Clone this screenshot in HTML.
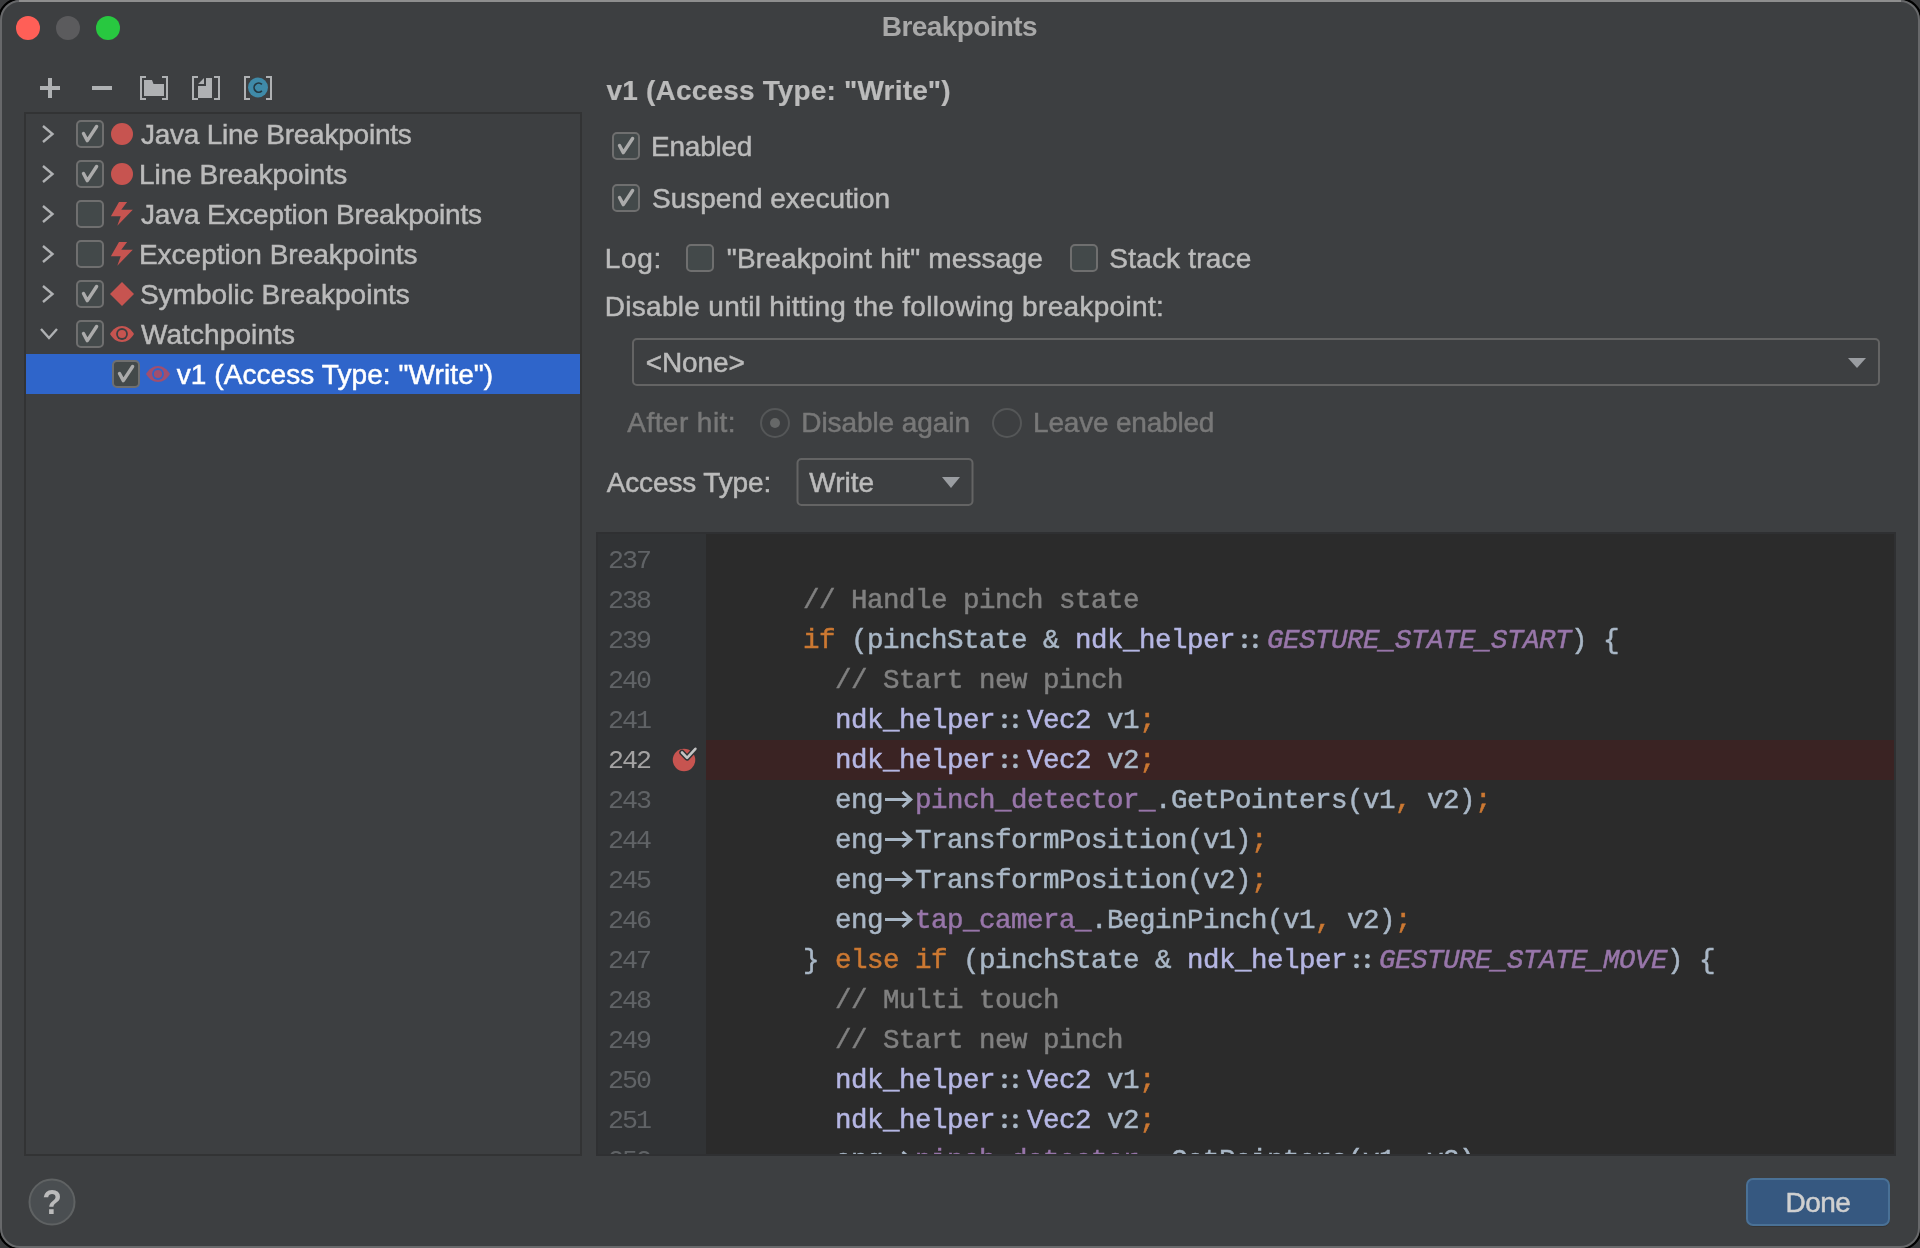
<!DOCTYPE html>
<html><head><meta charset="utf-8"><title>Breakpoints</title>
<style>html,body{margin:0;padding:0;background:#1E1E1E;overflow:hidden}svg{display:block}</style></head>
<body><svg width="1920" height="1248" viewBox="0 0 1920 1248" style="will-change:transform">
<rect x="0" y="0" width="1920" height="1248" fill="#3A3B3D"/>
<rect x="-1" y="-1" width="1922" height="1250" rx="21" fill="none" stroke="#000" stroke-width="2.5"/>
<rect x="1" y="1" width="1918" height="1246" rx="19" fill="#3D3F41" stroke="#67686A" stroke-width="2"/>
<path d="M19 1 H1901" stroke="#8E8E8E" stroke-width="2"/>
<circle cx="28" cy="28" r="12" fill="#FF5F57"/>
<circle cx="68" cy="28" r="12" fill="#5B5B5D"/>
<circle cx="108" cy="28" r="12" fill="#28C840"/>
<text x="881.75" y="36.25" font-family="Liberation Sans" font-size="28" font-weight="700" fill="#A8A8A8" stroke="#A8A8A8" stroke-width="0" letter-spacing="-0.590" xml:space="preserve" >Breakpoints</text>
<rect x="40" y="86" width="20" height="4" fill="#AFB1B3"/><rect x="48" y="78" width="4" height="20" fill="#AFB1B3"/>
<rect x="92" y="86" width="20" height="4" fill="#AFB1B3"/>
<path d="M146 77 H141 V99 H146 M162 77 H167 V99 H162" fill="none" stroke="#AFB1B3" stroke-width="2"/>
<path d="M144 80 H152 L153.5 84 H164 V96 H144 Z" fill="#AFB1B3"/>
<path d="M198 77 H193 V99 H198 M214 77 H219 V99 H214" fill="none" stroke="#AFB1B3" stroke-width="2"/>
<path d="M198 86 H206 V78 H212 V98 H198 Z" fill="#AFB1B3"/><path d="M198.2 84 L204 78 V84 Z" fill="#AFB1B3"/>
<path d="M250 77 H245 V99 H250 M266 77 H271 V99 H266" fill="none" stroke="#AFB1B3" stroke-width="2"/>
<circle cx="258" cy="87.5" r="10" fill="#3F8AA8"/><path d="M261.9 84.3 A4.6 4.6 0 1 0 261.9 90.9" fill="none" stroke="#243740" stroke-width="1.7"/>
<rect x="25" y="113" width="556" height="1042" fill="#3D3F41" stroke="#323334" stroke-width="2"/>
<rect x="26" y="354" width="554" height="40" rx="0" fill="#2F65CA" />
<path d="M43 126 L52.5 134 L43 142" fill="none" stroke="#AFB1B3" stroke-width="2.4"/>
<rect x="77" y="121" width="26" height="26" rx="4" fill="#43494A" stroke="#6F6F6F" stroke-width="2"/><path d="M83.5 133.5 L87.3 140.6 L96.6 126.5" fill="none" stroke="#ABABAB" stroke-width="3.4" stroke-linecap="round" stroke-linejoin="round"/>
<circle cx="122" cy="134" r="11" fill="#C75450"/>
<text x="140.90" y="144.00" font-family="Liberation Sans" font-size="28" font-weight="400" fill="#BBBBBB" stroke="#BBBBBB" stroke-width="0.5" letter-spacing="-0.230" xml:space="preserve" >Java Line Breakpoints</text>
<path d="M43 166 L52.5 174 L43 182" fill="none" stroke="#AFB1B3" stroke-width="2.4"/>
<rect x="77" y="161" width="26" height="26" rx="4" fill="#43494A" stroke="#6F6F6F" stroke-width="2"/><path d="M83.5 173.5 L87.3 180.6 L96.6 166.5" fill="none" stroke="#ABABAB" stroke-width="3.4" stroke-linecap="round" stroke-linejoin="round"/>
<circle cx="122" cy="174" r="11" fill="#C75450"/>
<text x="138.90" y="184.00" font-family="Liberation Sans" font-size="28" font-weight="400" fill="#BBBBBB" stroke="#BBBBBB" stroke-width="0.5" letter-spacing="-0.020" xml:space="preserve" >Line Breakpoints</text>
<path d="M43 206 L52.5 214 L43 222" fill="none" stroke="#AFB1B3" stroke-width="2.4"/>
<rect x="77" y="201" width="26" height="26" rx="4" fill="#43494A" stroke="#6F6F6F" stroke-width="2"/>
<path d="M119 202 H127.1 L121.3 209.8 H132.8 L117.3 225.7 L120.7 216.2 H110.9 Z" fill="#C75450"/>
<text x="140.90" y="224.00" font-family="Liberation Sans" font-size="28" font-weight="400" fill="#BBBBBB" stroke="#BBBBBB" stroke-width="0.5" letter-spacing="-0.172" xml:space="preserve" >Java Exception Breakpoints</text>
<path d="M43 246 L52.5 254 L43 262" fill="none" stroke="#AFB1B3" stroke-width="2.4"/>
<rect x="77" y="241" width="26" height="26" rx="4" fill="#43494A" stroke="#6F6F6F" stroke-width="2"/>
<path d="M119 242 H127.1 L121.3 249.8 H132.8 L117.3 265.7 L120.7 256.2 H110.9 Z" fill="#C75450"/>
<text x="138.90" y="264.00" font-family="Liberation Sans" font-size="28" font-weight="400" fill="#BBBBBB" stroke="#BBBBBB" stroke-width="0.5" letter-spacing="0.005" xml:space="preserve" >Exception Breakpoints</text>
<path d="M43 286 L52.5 294 L43 302" fill="none" stroke="#AFB1B3" stroke-width="2.4"/>
<rect x="77" y="281" width="26" height="26" rx="4" fill="#43494A" stroke="#6F6F6F" stroke-width="2"/><path d="M83.5 293.5 L87.3 300.6 L96.6 286.5" fill="none" stroke="#ABABAB" stroke-width="3.4" stroke-linecap="round" stroke-linejoin="round"/>
<path d="M122 282 L134 294 L122 306 L110 294 Z" fill="#C75450"/>
<text x="139.90" y="304.00" font-family="Liberation Sans" font-size="28" font-weight="400" fill="#BBBBBB" stroke="#BBBBBB" stroke-width="0.5" letter-spacing="0.037" xml:space="preserve" >Symbolic Breakpoints</text>
<path d="M41 329 L49 338 L57 329" fill="none" stroke="#AFB1B3" stroke-width="2.4"/>
<rect x="77" y="321" width="26" height="26" rx="4" fill="#43494A" stroke="#6F6F6F" stroke-width="2"/><path d="M83.5 333.5 L87.3 340.6 L96.6 326.5" fill="none" stroke="#ABABAB" stroke-width="3.4" stroke-linecap="round" stroke-linejoin="round"/>
<path d="M110 334 C113 329 117 326 122 326 C127 326 131 329 134 334 C131 339 127 342 122 342 C117 342 113 339 110 334 Z" fill="#C75450"/><circle cx="122" cy="334" r="5.9" fill="#3D3F41"/><circle cx="122" cy="334" r="4.1" fill="#C75450"/>
<text x="140.90" y="344.00" font-family="Liberation Sans" font-size="28" font-weight="400" fill="#BBBBBB" stroke="#BBBBBB" stroke-width="0.5" letter-spacing="0.110" xml:space="preserve" >Watchpoints</text>
<rect x="113" y="361" width="26" height="26" rx="4" fill="#43494A" stroke="#6F6F6F" stroke-width="2"/><path d="M119.5 373.5 L123.3 380.6 L132.6 366.5" fill="none" stroke="#ABABAB" stroke-width="3.4" stroke-linecap="round" stroke-linejoin="round"/>
<path d="M146 374 C149 369 153 366 158 366 C163 366 167 369 170 374 C167 379 163 382 158 382 C153 382 149 379 146 374 Z" fill="#A14F6E"/><circle cx="158" cy="374" r="5.9" fill="#2F65CA"/><circle cx="158" cy="374" r="4.1" fill="#A14F6E"/>
<text x="176.70" y="384.00" font-family="Liberation Sans" font-size="28" font-weight="400" fill="#FFFFFF" stroke="#FFFFFF" stroke-width="0.5" letter-spacing="0.083" xml:space="preserve" >v1 (Access Type: &quot;Write&quot;)</text>
<text x="606.60" y="100.00" font-family="Liberation Sans" font-size="28" font-weight="700" fill="#BBBBBB" stroke="#BBBBBB" stroke-width="0.2" letter-spacing="0.175" xml:space="preserve" >v1 (Access Type: &quot;Write&quot;)</text>
<rect x="613" y="133" width="26" height="26" rx="4" fill="#43494A" stroke="#6F6F6F" stroke-width="2"/><path d="M619.5 145.5 L623.3 152.6 L632.6 138.5" fill="none" stroke="#ABABAB" stroke-width="3.4" stroke-linecap="round" stroke-linejoin="round"/>
<text x="651.10" y="156.25" font-family="Liberation Sans" font-size="28" font-weight="400" fill="#BBBBBB" stroke="#BBBBBB" stroke-width="0.5" letter-spacing="-0.250" xml:space="preserve" >Enabled</text>
<rect x="613" y="185" width="26" height="26" rx="4" fill="#43494A" stroke="#6F6F6F" stroke-width="2"/><path d="M619.5 197.5 L623.3 204.6 L632.6 190.5" fill="none" stroke="#ABABAB" stroke-width="3.4" stroke-linecap="round" stroke-linejoin="round"/>
<text x="652.00" y="208.40" font-family="Liberation Sans" font-size="28" font-weight="400" fill="#BBBBBB" stroke="#BBBBBB" stroke-width="0.5" letter-spacing="-0.006" xml:space="preserve" >Suspend execution</text>
<text x="604.70" y="268.00" font-family="Liberation Sans" font-size="28" font-weight="400" fill="#BBBBBB" stroke="#BBBBBB" stroke-width="0.5" letter-spacing="0.667" xml:space="preserve" >Log:</text>
<rect x="687" y="245" width="26" height="26" rx="4" fill="#43494A" stroke="#6F6F6F" stroke-width="2"/>
<text x="726.80" y="268.00" font-family="Liberation Sans" font-size="28" font-weight="400" fill="#BBBBBB" stroke="#BBBBBB" stroke-width="0.5" letter-spacing="0.152" xml:space="preserve" >&quot;Breakpoint hit&quot; message</text>
<rect x="1071" y="245" width="26" height="26" rx="4" fill="#43494A" stroke="#6F6F6F" stroke-width="2"/>
<text x="1109.30" y="268.00" font-family="Liberation Sans" font-size="28" font-weight="400" fill="#BBBBBB" stroke="#BBBBBB" stroke-width="0.5" letter-spacing="0.190" xml:space="preserve" >Stack trace</text>
<text x="604.70" y="315.70" font-family="Liberation Sans" font-size="28" font-weight="400" fill="#BBBBBB" stroke="#BBBBBB" stroke-width="0.5" letter-spacing="0.311" xml:space="preserve" >Disable until hitting the following breakpoint:</text>
<rect x="633" y="339" width="1246" height="46" rx="4" fill="#3D3F41" stroke="#646464" stroke-width="2"/>
<text x="645.70" y="372.30" font-family="Liberation Sans" font-size="28" font-weight="400" fill="#BBBBBB" stroke="#BBBBBB" stroke-width="0.5" letter-spacing="-0.080" xml:space="preserve" >&lt;None&gt;</text>
<path d="M1848 358 H1866 L1857 368 Z" fill="#9A9DA1"/>
<text x="627.30" y="431.70" font-family="Liberation Sans" font-size="28" font-weight="400" fill="#787878" stroke="#787878" stroke-width="0.5" letter-spacing="0.444" xml:space="preserve" >After hit:</text>
<circle cx="775" cy="423" r="14" fill="#3D3F41" stroke="#555758" stroke-width="2"/><circle cx="775" cy="423" r="5" fill="#666868"/>
<text x="801.30" y="431.70" font-family="Liberation Sans" font-size="28" font-weight="400" fill="#787878" stroke="#787878" stroke-width="0.5" letter-spacing="-0.083" xml:space="preserve" >Disable again</text>
<circle cx="1007" cy="423" r="14" fill="#3D3F41" stroke="#555758" stroke-width="2"/>
<text x="1033.00" y="431.70" font-family="Liberation Sans" font-size="28" font-weight="400" fill="#787878" stroke="#787878" stroke-width="0.5" letter-spacing="-0.192" xml:space="preserve" >Leave enabled</text>
<text x="606.70" y="492.30" font-family="Liberation Sans" font-size="28" font-weight="400" fill="#BBBBBB" stroke="#BBBBBB" stroke-width="0.5" letter-spacing="-0.127" xml:space="preserve" >Access Type:</text>
<rect x="797.5" y="459" width="175" height="46" rx="4" fill="#3D3F41" stroke="#646464" stroke-width="2"/>
<text x="809.30" y="492.30" font-family="Liberation Sans" font-size="28" font-weight="400" fill="#BBBBBB" stroke="#BBBBBB" stroke-width="0.5" letter-spacing="0.000" xml:space="preserve" >Write</text>
<path d="M942 477 H960 L951 488 Z" fill="#9A9DA1"/>
<rect x="596" y="532" width="1300" height="624" rx="0" fill="#2B2B2B" />
<rect x="596" y="532" width="110" height="624" rx="0" fill="#313335" />
<rect x="706" y="740" width="1190" height="40" rx="0" fill="#3A2323" />
<rect x="597" y="533" width="1298" height="622" fill="none" stroke="#2F3032" stroke-width="2"/>
<svg x="596" y="534" width="1300" height="620" overflow="hidden"><g transform="translate(-596,-534)">
<text x="650" y="568" text-anchor="end" font-family="Liberation Mono" font-size="26.667" letter-spacing="-2" fill="#606366">237</text>
<text x="650" y="608" text-anchor="end" font-family="Liberation Mono" font-size="26.667" letter-spacing="-2" fill="#606366">238</text>
<text x="803" y="608" font-family="Liberation Mono" font-size="27.5" letter-spacing="-0.502685546875" font-style="normal" fill="#808080" stroke="#808080" stroke-width="0.5" xml:space="preserve">// Handle pinch state</text>
<text x="650" y="648" text-anchor="end" font-family="Liberation Mono" font-size="26.667" letter-spacing="-2" fill="#606366">239</text>
<text x="803" y="648" font-family="Liberation Mono" font-size="27.5" letter-spacing="-0.502685546875" font-style="normal" fill="#CC7832" stroke="#CC7832" stroke-width="0.5" xml:space="preserve">if</text>
<text x="835" y="648" font-family="Liberation Mono" font-size="27.5" letter-spacing="-0.502685546875" font-style="normal" fill="#A9B7C6" stroke="#A9B7C6" stroke-width="0.5" xml:space="preserve"> (pinchState &amp; </text>
<text x="1075" y="648" font-family="Liberation Mono" font-size="27.5" letter-spacing="-0.502685546875" font-style="normal" fill="#B5B6E3" stroke="#B5B6E3" stroke-width="0.5" xml:space="preserve">ndk_helper</text>
<circle cx="1244.5" cy="636.4" r="2.4" fill="#A9B7C6"/>
<circle cx="1244.5" cy="645.9" r="2.4" fill="#A9B7C6"/>
<circle cx="1255.4" cy="636.4" r="2.4" fill="#A9B7C6"/>
<circle cx="1255.4" cy="645.9" r="2.4" fill="#A9B7C6"/>
<text x="1267" y="648" font-family="Liberation Mono" font-size="27.5" letter-spacing="-0.502685546875" font-style="italic" fill="#9876AA" stroke="#9876AA" stroke-width="0.5" xml:space="preserve">GESTURE_STATE_START</text>
<text x="1571" y="648" font-family="Liberation Mono" font-size="27.5" letter-spacing="-0.502685546875" font-style="normal" fill="#A9B7C6" stroke="#A9B7C6" stroke-width="0.5" xml:space="preserve">) {</text>
<text x="650" y="688" text-anchor="end" font-family="Liberation Mono" font-size="26.667" letter-spacing="-2" fill="#606366">240</text>
<text x="835" y="688" font-family="Liberation Mono" font-size="27.5" letter-spacing="-0.502685546875" font-style="normal" fill="#808080" stroke="#808080" stroke-width="0.5" xml:space="preserve">// Start new pinch</text>
<text x="650" y="728" text-anchor="end" font-family="Liberation Mono" font-size="26.667" letter-spacing="-2" fill="#606366">241</text>
<text x="835" y="728" font-family="Liberation Mono" font-size="27.5" letter-spacing="-0.502685546875" font-style="normal" fill="#B5B6E3" stroke="#B5B6E3" stroke-width="0.5" xml:space="preserve">ndk_helper</text>
<circle cx="1004.5" cy="716.4" r="2.4" fill="#A9B7C6"/>
<circle cx="1004.5" cy="725.9" r="2.4" fill="#A9B7C6"/>
<circle cx="1015.4" cy="716.4" r="2.4" fill="#A9B7C6"/>
<circle cx="1015.4" cy="725.9" r="2.4" fill="#A9B7C6"/>
<text x="1027" y="728" font-family="Liberation Mono" font-size="27.5" letter-spacing="-0.502685546875" font-style="normal" fill="#B5B6E3" stroke="#B5B6E3" stroke-width="0.5" xml:space="preserve">Vec2</text>
<text x="1091" y="728" font-family="Liberation Mono" font-size="27.5" letter-spacing="-0.502685546875" font-style="normal" fill="#A9B7C6" stroke="#A9B7C6" stroke-width="0.5" xml:space="preserve"> v1</text>
<text x="1139" y="728" font-family="Liberation Mono" font-size="27.5" letter-spacing="-0.502685546875" font-style="normal" fill="#CC7832" stroke="#CC7832" stroke-width="0.5" xml:space="preserve">;</text>
<text x="650" y="768" text-anchor="end" font-family="Liberation Mono" font-size="26.667" letter-spacing="-2" fill="#A4A3A3">242</text>
<text x="835" y="768" font-family="Liberation Mono" font-size="27.5" letter-spacing="-0.502685546875" font-style="normal" fill="#B5B6E3" stroke="#B5B6E3" stroke-width="0.5" xml:space="preserve">ndk_helper</text>
<circle cx="1004.5" cy="756.4" r="2.4" fill="#A9B7C6"/>
<circle cx="1004.5" cy="765.9" r="2.4" fill="#A9B7C6"/>
<circle cx="1015.4" cy="756.4" r="2.4" fill="#A9B7C6"/>
<circle cx="1015.4" cy="765.9" r="2.4" fill="#A9B7C6"/>
<text x="1027" y="768" font-family="Liberation Mono" font-size="27.5" letter-spacing="-0.502685546875" font-style="normal" fill="#B5B6E3" stroke="#B5B6E3" stroke-width="0.5" xml:space="preserve">Vec2</text>
<text x="1091" y="768" font-family="Liberation Mono" font-size="27.5" letter-spacing="-0.502685546875" font-style="normal" fill="#A9B7C6" stroke="#A9B7C6" stroke-width="0.5" xml:space="preserve"> v2</text>
<text x="1139" y="768" font-family="Liberation Mono" font-size="27.5" letter-spacing="-0.502685546875" font-style="normal" fill="#CC7832" stroke="#CC7832" stroke-width="0.5" xml:space="preserve">;</text>
<text x="650" y="808" text-anchor="end" font-family="Liberation Mono" font-size="26.667" letter-spacing="-2" fill="#606366">243</text>
<text x="835" y="808" font-family="Liberation Mono" font-size="27.5" letter-spacing="-0.502685546875" font-style="normal" fill="#A9B7C6" stroke="#A9B7C6" stroke-width="0.5" xml:space="preserve">eng</text>
<path d="M885 799.4 H910.5 M902.5 791.8 L910.8 799.4 L902.5 806.9" fill="none" stroke="#A9B7C6" stroke-width="3"/>
<text x="915" y="808" font-family="Liberation Mono" font-size="27.5" letter-spacing="-0.502685546875" font-style="normal" fill="#9876AA" stroke="#9876AA" stroke-width="0.5" xml:space="preserve">pinch_detector_</text>
<text x="1155" y="808" font-family="Liberation Mono" font-size="27.5" letter-spacing="-0.502685546875" font-style="normal" fill="#A9B7C6" stroke="#A9B7C6" stroke-width="0.5" xml:space="preserve">.GetPointers(v1</text>
<text x="1395" y="808" font-family="Liberation Mono" font-size="27.5" letter-spacing="-0.502685546875" font-style="normal" fill="#CC7832" stroke="#CC7832" stroke-width="0.5" xml:space="preserve">,</text>
<text x="1411" y="808" font-family="Liberation Mono" font-size="27.5" letter-spacing="-0.502685546875" font-style="normal" fill="#A9B7C6" stroke="#A9B7C6" stroke-width="0.5" xml:space="preserve"> v2)</text>
<text x="1475" y="808" font-family="Liberation Mono" font-size="27.5" letter-spacing="-0.502685546875" font-style="normal" fill="#CC7832" stroke="#CC7832" stroke-width="0.5" xml:space="preserve">;</text>
<text x="650" y="848" text-anchor="end" font-family="Liberation Mono" font-size="26.667" letter-spacing="-2" fill="#606366">244</text>
<text x="835" y="848" font-family="Liberation Mono" font-size="27.5" letter-spacing="-0.502685546875" font-style="normal" fill="#A9B7C6" stroke="#A9B7C6" stroke-width="0.5" xml:space="preserve">eng</text>
<path d="M885 839.4 H910.5 M902.5 831.8 L910.8 839.4 L902.5 846.9" fill="none" stroke="#A9B7C6" stroke-width="3"/>
<text x="915" y="848" font-family="Liberation Mono" font-size="27.5" letter-spacing="-0.502685546875" font-style="normal" fill="#A9B7C6" stroke="#A9B7C6" stroke-width="0.5" xml:space="preserve">TransformPosition(v1)</text>
<text x="1251" y="848" font-family="Liberation Mono" font-size="27.5" letter-spacing="-0.502685546875" font-style="normal" fill="#CC7832" stroke="#CC7832" stroke-width="0.5" xml:space="preserve">;</text>
<text x="650" y="888" text-anchor="end" font-family="Liberation Mono" font-size="26.667" letter-spacing="-2" fill="#606366">245</text>
<text x="835" y="888" font-family="Liberation Mono" font-size="27.5" letter-spacing="-0.502685546875" font-style="normal" fill="#A9B7C6" stroke="#A9B7C6" stroke-width="0.5" xml:space="preserve">eng</text>
<path d="M885 879.4 H910.5 M902.5 871.8 L910.8 879.4 L902.5 886.9" fill="none" stroke="#A9B7C6" stroke-width="3"/>
<text x="915" y="888" font-family="Liberation Mono" font-size="27.5" letter-spacing="-0.502685546875" font-style="normal" fill="#A9B7C6" stroke="#A9B7C6" stroke-width="0.5" xml:space="preserve">TransformPosition(v2)</text>
<text x="1251" y="888" font-family="Liberation Mono" font-size="27.5" letter-spacing="-0.502685546875" font-style="normal" fill="#CC7832" stroke="#CC7832" stroke-width="0.5" xml:space="preserve">;</text>
<text x="650" y="928" text-anchor="end" font-family="Liberation Mono" font-size="26.667" letter-spacing="-2" fill="#606366">246</text>
<text x="835" y="928" font-family="Liberation Mono" font-size="27.5" letter-spacing="-0.502685546875" font-style="normal" fill="#A9B7C6" stroke="#A9B7C6" stroke-width="0.5" xml:space="preserve">eng</text>
<path d="M885 919.4 H910.5 M902.5 911.8 L910.8 919.4 L902.5 926.9" fill="none" stroke="#A9B7C6" stroke-width="3"/>
<text x="915" y="928" font-family="Liberation Mono" font-size="27.5" letter-spacing="-0.502685546875" font-style="normal" fill="#9876AA" stroke="#9876AA" stroke-width="0.5" xml:space="preserve">tap_camera_</text>
<text x="1091" y="928" font-family="Liberation Mono" font-size="27.5" letter-spacing="-0.502685546875" font-style="normal" fill="#A9B7C6" stroke="#A9B7C6" stroke-width="0.5" xml:space="preserve">.BeginPinch(v1</text>
<text x="1315" y="928" font-family="Liberation Mono" font-size="27.5" letter-spacing="-0.502685546875" font-style="normal" fill="#CC7832" stroke="#CC7832" stroke-width="0.5" xml:space="preserve">,</text>
<text x="1331" y="928" font-family="Liberation Mono" font-size="27.5" letter-spacing="-0.502685546875" font-style="normal" fill="#A9B7C6" stroke="#A9B7C6" stroke-width="0.5" xml:space="preserve"> v2)</text>
<text x="1395" y="928" font-family="Liberation Mono" font-size="27.5" letter-spacing="-0.502685546875" font-style="normal" fill="#CC7832" stroke="#CC7832" stroke-width="0.5" xml:space="preserve">;</text>
<text x="650" y="968" text-anchor="end" font-family="Liberation Mono" font-size="26.667" letter-spacing="-2" fill="#606366">247</text>
<text x="803" y="968" font-family="Liberation Mono" font-size="27.5" letter-spacing="-0.502685546875" font-style="normal" fill="#A9B7C6" stroke="#A9B7C6" stroke-width="0.5" xml:space="preserve">} </text>
<text x="835" y="968" font-family="Liberation Mono" font-size="27.5" letter-spacing="-0.502685546875" font-style="normal" fill="#CC7832" stroke="#CC7832" stroke-width="0.5" xml:space="preserve">else if</text>
<text x="947" y="968" font-family="Liberation Mono" font-size="27.5" letter-spacing="-0.502685546875" font-style="normal" fill="#A9B7C6" stroke="#A9B7C6" stroke-width="0.5" xml:space="preserve"> (pinchState &amp; </text>
<text x="1187" y="968" font-family="Liberation Mono" font-size="27.5" letter-spacing="-0.502685546875" font-style="normal" fill="#B5B6E3" stroke="#B5B6E3" stroke-width="0.5" xml:space="preserve">ndk_helper</text>
<circle cx="1356.5" cy="956.4" r="2.4" fill="#A9B7C6"/>
<circle cx="1356.5" cy="965.9" r="2.4" fill="#A9B7C6"/>
<circle cx="1367.4" cy="956.4" r="2.4" fill="#A9B7C6"/>
<circle cx="1367.4" cy="965.9" r="2.4" fill="#A9B7C6"/>
<text x="1379" y="968" font-family="Liberation Mono" font-size="27.5" letter-spacing="-0.502685546875" font-style="italic" fill="#9876AA" stroke="#9876AA" stroke-width="0.5" xml:space="preserve">GESTURE_STATE_MOVE</text>
<text x="1667" y="968" font-family="Liberation Mono" font-size="27.5" letter-spacing="-0.502685546875" font-style="normal" fill="#A9B7C6" stroke="#A9B7C6" stroke-width="0.5" xml:space="preserve">) {</text>
<text x="650" y="1008" text-anchor="end" font-family="Liberation Mono" font-size="26.667" letter-spacing="-2" fill="#606366">248</text>
<text x="835" y="1008" font-family="Liberation Mono" font-size="27.5" letter-spacing="-0.502685546875" font-style="normal" fill="#808080" stroke="#808080" stroke-width="0.5" xml:space="preserve">// Multi touch</text>
<text x="650" y="1048" text-anchor="end" font-family="Liberation Mono" font-size="26.667" letter-spacing="-2" fill="#606366">249</text>
<text x="835" y="1048" font-family="Liberation Mono" font-size="27.5" letter-spacing="-0.502685546875" font-style="normal" fill="#808080" stroke="#808080" stroke-width="0.5" xml:space="preserve">// Start new pinch</text>
<text x="650" y="1088" text-anchor="end" font-family="Liberation Mono" font-size="26.667" letter-spacing="-2" fill="#606366">250</text>
<text x="835" y="1088" font-family="Liberation Mono" font-size="27.5" letter-spacing="-0.502685546875" font-style="normal" fill="#B5B6E3" stroke="#B5B6E3" stroke-width="0.5" xml:space="preserve">ndk_helper</text>
<circle cx="1004.5" cy="1076.4" r="2.4" fill="#A9B7C6"/>
<circle cx="1004.5" cy="1085.9" r="2.4" fill="#A9B7C6"/>
<circle cx="1015.4" cy="1076.4" r="2.4" fill="#A9B7C6"/>
<circle cx="1015.4" cy="1085.9" r="2.4" fill="#A9B7C6"/>
<text x="1027" y="1088" font-family="Liberation Mono" font-size="27.5" letter-spacing="-0.502685546875" font-style="normal" fill="#B5B6E3" stroke="#B5B6E3" stroke-width="0.5" xml:space="preserve">Vec2</text>
<text x="1091" y="1088" font-family="Liberation Mono" font-size="27.5" letter-spacing="-0.502685546875" font-style="normal" fill="#A9B7C6" stroke="#A9B7C6" stroke-width="0.5" xml:space="preserve"> v1</text>
<text x="1139" y="1088" font-family="Liberation Mono" font-size="27.5" letter-spacing="-0.502685546875" font-style="normal" fill="#CC7832" stroke="#CC7832" stroke-width="0.5" xml:space="preserve">;</text>
<text x="650" y="1128" text-anchor="end" font-family="Liberation Mono" font-size="26.667" letter-spacing="-2" fill="#606366">251</text>
<text x="835" y="1128" font-family="Liberation Mono" font-size="27.5" letter-spacing="-0.502685546875" font-style="normal" fill="#B5B6E3" stroke="#B5B6E3" stroke-width="0.5" xml:space="preserve">ndk_helper</text>
<circle cx="1004.5" cy="1116.4" r="2.4" fill="#A9B7C6"/>
<circle cx="1004.5" cy="1125.9" r="2.4" fill="#A9B7C6"/>
<circle cx="1015.4" cy="1116.4" r="2.4" fill="#A9B7C6"/>
<circle cx="1015.4" cy="1125.9" r="2.4" fill="#A9B7C6"/>
<text x="1027" y="1128" font-family="Liberation Mono" font-size="27.5" letter-spacing="-0.502685546875" font-style="normal" fill="#B5B6E3" stroke="#B5B6E3" stroke-width="0.5" xml:space="preserve">Vec2</text>
<text x="1091" y="1128" font-family="Liberation Mono" font-size="27.5" letter-spacing="-0.502685546875" font-style="normal" fill="#A9B7C6" stroke="#A9B7C6" stroke-width="0.5" xml:space="preserve"> v2</text>
<text x="1139" y="1128" font-family="Liberation Mono" font-size="27.5" letter-spacing="-0.502685546875" font-style="normal" fill="#CC7832" stroke="#CC7832" stroke-width="0.5" xml:space="preserve">;</text>
<text x="650" y="1168" text-anchor="end" font-family="Liberation Mono" font-size="26.667" letter-spacing="-2" fill="#606366">252</text>
<text x="835" y="1168" font-family="Liberation Mono" font-size="27.5" letter-spacing="-0.502685546875" font-style="normal" fill="#A9B7C6" stroke="#A9B7C6" stroke-width="0.5" xml:space="preserve">eng</text>
<path d="M885 1159.4 H910.5 M902.5 1151.8 L910.8 1159.4 L902.5 1166.9" fill="none" stroke="#A9B7C6" stroke-width="3"/>
<text x="915" y="1168" font-family="Liberation Mono" font-size="27.5" letter-spacing="-0.502685546875" font-style="normal" fill="#9876AA" stroke="#9876AA" stroke-width="0.5" xml:space="preserve">pinch_detector_</text>
<text x="1155" y="1168" font-family="Liberation Mono" font-size="27.5" letter-spacing="-0.502685546875" font-style="normal" fill="#A9B7C6" stroke="#A9B7C6" stroke-width="0.5" xml:space="preserve">.GetPointers(v1</text>
<text x="1395" y="1168" font-family="Liberation Mono" font-size="27.5" letter-spacing="-0.502685546875" font-style="normal" fill="#CC7832" stroke="#CC7832" stroke-width="0.5" xml:space="preserve">,</text>
<text x="1411" y="1168" font-family="Liberation Mono" font-size="27.5" letter-spacing="-0.502685546875" font-style="normal" fill="#A9B7C6" stroke="#A9B7C6" stroke-width="0.5" xml:space="preserve"> v2)</text>
</g></svg>
<circle cx="684" cy="760" r="11.25" fill="#C75450"/>
<path d="M682 752.5 L687.1 757.9 L695.4 748.8" fill="none" stroke="#313335" stroke-width="5.5" stroke-linecap="round" stroke-linejoin="round"/>
<path d="M682 752.5 L687.1 757.9 L695.4 748.8" fill="none" stroke="#C4C4C4" stroke-width="2.6" stroke-linecap="round" stroke-linejoin="round"/>
<circle cx="52" cy="1202" r="22.5" fill="#4A4E51" stroke="#5F6263" stroke-width="2"/>
<text x="0" y="0" transform="translate(52 1214.3) scale(0.89 1)" text-anchor="middle" font-family="Liberation Sans" font-size="36" font-weight="700" fill="#BBBBBB">?</text>
<rect x="1747" y="1180" width="143" height="47" rx="7" fill="#343536"/>
<rect x="1747" y="1179" width="142" height="46" rx="6" fill="#365880" stroke="#4A7196" stroke-width="2"/>
<text x="1785.40" y="1212.00" font-family="Liberation Sans" font-size="28" font-weight="400" fill="#D0D0D0" stroke="#D0D0D0" stroke-width="0.5" letter-spacing="-0.467" xml:space="preserve" >Done</text>
</svg></body></html>
